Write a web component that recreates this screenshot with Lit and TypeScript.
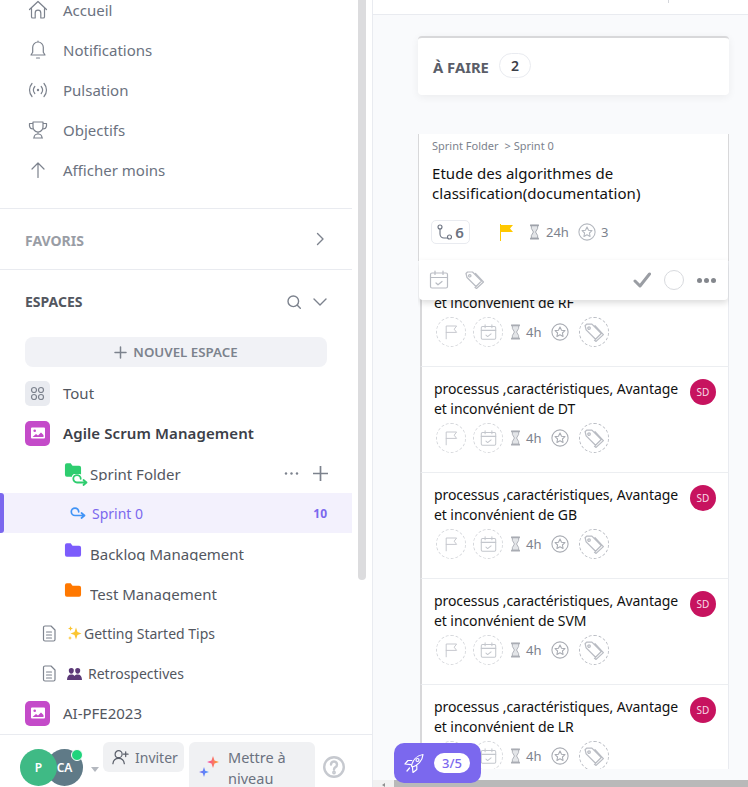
import {LitElement, html, css} from "lit"
import {customElement} from "lit/decorators.js"

const navItems = [
    {label: "Accueil", icon: html`<svg class="ico" viewBox="0 0 20 20"><path d="M1.5 9.5 10 1.5l8.500 8M3.500 8.500v8.200a1.300 1.300 0 0 0 1.300 1.300H7.200v-5a2.800 2.800 0 0 1 5.600 0v5h2.400a1.300 1.300 0 0 0 1.300-1.300V8.500"/></svg>`},
    {label: "Notifications", icon: html`<svg class="ico" viewBox="0 0 20 20"><path d="M10 2a5.300 5.300 0 0 0-5.300 5.300v5L3 15h14l-1.700-2.700v-5A5.300 5.300 0 0 0 10 2zM10 1v1M8.500 18h3"/></svg>`},
    {label: "Pulsation", icon: html`<svg class="ico" viewBox="0 0 20 20"><path d="M4 3.500c-3.300 3.800-3.300 9.200 0 13M16 3.500c3.300 3.800 3.300 9.200 0 13M6.800 6.500c-1.700 2.100-1.700 4.900 0 7M13.200 6.500c1.700 2.100 1.700 4.900 0 7"/><circle cx="10" cy="10" r="1.200" fill="currentColor" stroke="none"/></svg>`},
    {label: "Objectifs", icon: html`<svg class="ico" viewBox="0 0 20 20"><path d="M5 2h10v5a5 5 0 0 1-10 0zM5 3.500H1.500v2.500A3.500 3.500 0 0 0 5 9M15 3.500h3.500v2.500A3.500 3.500 0 0 1 15 9M10 12v2M6 18c0-2.500 2-4 4-4s4 1.500 4 4M5.500 18h9"/></svg>`},
    {label: "Afficher moins", icon: html`<svg class="ico" viewBox="0 0 20 20"><path d="M10 17.500V3M4 9l6-6 6 6"/></svg>`},
]

const folderPath = "M1 3a2 2 0 0 1 2-2h4l2 2.500h7a2 2 0 0 1 2 2V13a2 2 0 0 1-2 2H3a2 2 0 0 1-2-2z"

const spaceIcon = html`<span class="space-ico"><svg viewBox="0 0 16 16"><path fill="#fff" d="M2 2.500h12a1 1 0 0 1 1 1v9a1 1 0 0 1-1 1H2a1 1 0 0 1-1-1v-9a1 1 0 0 1 1-1z"/><circle cx="4.700" cy="5.800" r="1.300" fill="#c44bc9"/><path fill="#c44bc9" d="M2.500 12l3.500-3 2 1.500 3-3 2.500 2.500V12z"/></svg></span>`

const docIcon = html`<svg class="doc" viewBox="0 0 14 17"><path d="M3 1h6l4 4v9.500a1.500 1.500 0 0 1-1.500 1.500h-8.500A1.500 1.500 0 0 1 1.500 14.500V2.500A1.500 1.500 0 0 1 3 1zM4.500 7h5M4.500 10h5M4.500 13h5"/></svg>`

const flagIcon = html`<svg class="flag" viewBox="0 0 20 20"><path d="M4 18.500V2.500h13l-3 4 3 4H4"/></svg>`
const calIcon = html`<svg class="cal" viewBox="0 0 20 20"><rect x="1.500" y="3" width="17" height="15" rx="1.500"/><path d="M1.500 7.500h17M6 1v3.500M14 1v3.500M7 13l2 1.800 4-3.300"/></svg>`
const tagIcon = html`<svg class="tag" viewBox="0 0 22 20"><path d="M2 3.500 3.500 2h5l9 9-5.500 5.500-9-9zM11 17.500l1.500 1 7-6.500-8-8.500"/><circle cx="5.800" cy="5.800" r="1.200"/></svg>`
const glassIcon = html`<svg class="glass" viewBox="0 0 12 18"><path class="sand" d="M2.500 2v3L4.800 9l-2.300 4v3h7v-3L7.200 9l2.300-4V2z"/><path class="bars" d="M1 1.500h10M1 16.500h10"/></svg>`
const starIcon = html`<svg class="star" viewBox="0 0 20 20"><circle cx="10" cy="10" r="9"/><path d="m10 4.500 1.700 3.500 3.800.5-2.800 2.600.7 3.800L10 13l-3.400 1.900.7-3.800-2.800-2.600 3.800-.5z"/></svg>`

const rows = ["RF", "DT", "GB", "SVM", "LR"]

@customElement('app-root')
export class AppRoot extends LitElement {

    static styles = css`
        :host {
            display: block;
            width: 748px;
            height: 787px;
            overflow: hidden;
            font-family: "Noto Sans", sans-serif;
            background: #fff;
        }
        svg {
            display: block;
            fill: none;
            stroke: currentColor;
            stroke-width: 1.2;
            stroke-linecap: round;
            stroke-linejoin: round;
        }
        .page {
            display: flex;
            height: 787px;
        }

        /* sidebar */
        .sidebar {
            width: 372px;
            flex: none;
            display: flex;
            flex-direction: column;
            border-right: 1px solid #e9ebf0;
        }
        .side-scroll {
            flex: 1;
            min-height: 0;
            display: flex;
            overflow: hidden;
        }
        .side-content {
            width: 352px;
            flex: none;
        }
        .thumb {
            width: 8px;
            height: 580px;
            margin-left: 6px;
            background: #dcdcde;
            border-radius: 0 0 4px 4px;
        }
        .nav {
            margin-top: -10px;
            padding-bottom: 18px;
            border-bottom: 1px solid #e9ebf0;
        }
        .nav-row {
            height: 40px;
            display: flex;
            align-items: center;
            padding-left: 28px;
            color: #6b7280;
            font-size: 15px;
        }
        .ico {
            width: 20px;
            height: 20px;
            margin-right: 15px;
            color: #7c828d;
        }
        .section {
            height: 61px;
            display: flex;
            align-items: center;
            justify-content: space-between;
            padding: 3px 25px 0;
            font-size: 14px;
            font-weight: 700;
            color: #999da5;
            border-bottom: 1px solid #e9ebf0;
            box-sizing: border-box;
        }
        .section svg {
            width: 14px;
            height: 14px;
            color: #7c828d;
            stroke-width: 1.400;
        }
        .section > svg {
            margin-top: -3px;
        }
        .section.espaces {
            height: 63px;
            padding-top: 0;
            border: 0;
            color: #53575f;
        }
        .espaces div {
            display: flex;
            gap: 12px;
        }
        .new-space {
            margin: 4px 25px 6px;
            height: 30px;
            background: #f1f2f6;
            border-radius: 8px;
            display: flex;
            align-items: center;
            justify-content: center;
            gap: 6px;
            color: #7c828d;
            font-size: 13.300px;
            font-weight: 600;
        }
        .new-space svg {
            width: 13px;
            height: 13px;
            stroke-width: 1.500;
        }
        .row {
            height: 40px;
            display: flex;
            align-items: center;
            color: #53575f;
            font-size: 15px;
        }
        .row.space {
            padding-left: 25px;
            gap: 13px;
        }
        .row.space.bold {
            font-weight: 600;
            color: #3c4048;
            letter-spacing: .1px;
        }
        .space-ico, .all-ico {
            width: 25px;
            height: 25px;
            border-radius: 5px;
            background: #c44bc9;
            display: flex;
            align-items: center;
            justify-content: center;
        }
        .space-ico svg {
            width: 16px;
            height: 16px;
            stroke: none;
        }
        .all-ico {
            background: #e9ebf0;
            color: #7c828d;
        }
        .all-ico svg {
            width: 15px;
            height: 15px;
        }
        .row.folder {
            padding-left: 64px;
            position: relative;
        }
        .folder-ico {
            width: 18px;
            height: 16px;
            margin: -6px 8px 0 0;
            stroke: none;
            flex: none;
        }
        .clip {
            height: 15px;
            line-height: 16px;
            overflow: hidden;
            color: #53575f;
        }
        .badge-loop {
            position: absolute;
            left: 72px;
            top: 21px;
            width: 16px;
            height: 13px;
            color: #2ecd6f;
            stroke-width: 1.800;
        }
        .badge-loop .halo {
            stroke: #fff;
            stroke-width: 4;
        }
        .actions {
            margin-left: auto;
            margin-right: 24px;
            display: flex;
            align-items: center;
            gap: 14px;
            color: #7c828d;
        }
        .actions svg {
            width: 15px;
            height: 15px;
            stroke-width: 1.700;
        }
        .active {
            background: #f3f1fd;
            color: #7b68ee;
            padding-left: 70px;
            position: relative;
            font-size: 14px;
        }
        .active::before {
            content: "";
            position: absolute;
            left: 0;
            top: 0;
            bottom: 0;
            width: 4px;
            background: #7b68ee;
            border-radius: 0 3px 3px 0;
        }
        .active svg {
            width: 16px;
            height: 13px;
            margin-right: 6px;
            color: #4194f6;
            stroke-width: 1.700;
        }
        .count {
            margin-left: auto;
            margin-right: 25px;
            font-size: 12px;
            font-weight: 700;
        }
        .row.doc-row {
            padding-left: 42px;
            font-size: 14px;
        }
        .doc {
            width: 14px;
            height: 17px;
            color: #7c828d;
            margin-right: 11px;
        }
        .emoji {
            width: 15px;
            height: 15px;
            stroke: none;
            flex: none;
        }
        .tips {
            margin-left: 2px;
        }
        .retro {
            margin-left: 6px;
        }

        /* footer */
        .side-foot {
            height: 53px;
            flex: none;
            border-top: 1px solid #e9ebf0;
            display: flex;
            padding: 7px 0 0 20px;
            box-sizing: border-box;
            overflow: hidden;
        }
        .avatars {
            position: relative;
            width: 63px;
            height: 37px;
            margin-top: 7px;
            color: #fff;
            font-size: 12px;
            font-weight: 600;
        }
        .avatars span {
            position: absolute;
            top: 0;
            width: 37px;
            height: 37px;
            border-radius: 50%;
            display: flex;
            align-items: center;
            justify-content: center;
        }
        .av-ca {
            left: 26px;
            background: #5f7a87;
        }
        .av-p {
            left: 0;
            background: #3fba85;
        }
        .avatars .dot {
            left: 51px;
            top: 0;
            width: 10px;
            height: 10px;
            background: #1fd47c;
            border: 1px solid #fff;
        }
        .caret {
            width: 0;
            height: 0;
            margin: 25px 0 0 8px;
            border: 4px solid transparent;
            border-top: 5px solid #b4b8bf;
            border-bottom: 0;
        }
        .foot-btn {
            background: #f0f1f3;
            border-radius: 6px;
            color: #6b7280;
            font-size: 14.500px;
            line-height: 21px;
        }
        .invite {
            margin-left: 4px;
            height: 30px;
            width: 81px;
            box-sizing: border-box;
            padding-left: 9px;
            display: flex;
            align-items: center;
            gap: 6px;
            font-size: 14px;
        }
        .invite svg {
            width: 17px;
            height: 16px;
            color: #5b606b;
            stroke-width: 1.300;
        }
        .upgrade {
            margin-left: 5px;
            width: 126px;
            height: 60px;
            display: flex;
            gap: 8px;
            padding-left: 8px;
            padding-top: 5px;
            box-sizing: border-box;
        }
        .upgrade svg {
            width: 23px;
            height: 28px;
            margin-top: 3px;
            stroke: none;
            flex: none;
        }
        .help {
            width: 22px;
            height: 22px;
            margin: 14px 0 0 8px;
            color: #c6c9cf;
            stroke-width: 2.400;
        }

        /* board */
        .main {
            flex: 1;
            min-width: 0;
            display: flex;
            flex-direction: column;
            background: #f9fafc;
            position: relative;
        }
        .topbar {
            height: 14px;
            flex: none;
            background: #fff;
            border-bottom: 1px solid #e9ebf0;
            padding-left: 295px;
        }
        .topbar i {
            display: block;
            width: 1px;
            height: 3px;
            background: #d5d7dc;
        }
        .board {
            flex: 1;
            min-height: 0;
            display: flex;
            flex-direction: column;
            padding: 21px 19px 11px 45px;
        }
        .col-head {
            height: 59px;
            flex: none;
            box-sizing: border-box;
            background: #fff;
            border-top: 2px solid #d8d8da;
            border-radius: 4px;
            box-shadow: 0 2px 8px rgba(0, 0, 0, .06);
            display: flex;
            align-items: center;
            gap: 10px;
            padding-left: 15px;
            margin-bottom: 39px;
            font-size: 14.800px;
            font-weight: 700;
            color: #5a5d68;
        }
        .col-count {
            width: 32px;
            height: 25px;
            box-sizing: border-box;
            border: 1px solid #e9ebf0;
            border-radius: 13px;
            display: flex;
            align-items: center;
            justify-content: center;
            font-size: 14px;
            font-weight: 600;
            color: #3c4048;
            margin-top: -2px;
        }
        .tasks {
            flex: 1;
            min-height: 0;
            overflow: hidden;
            position: relative;
        }
        .open-card {
            height: 127px;
            box-sizing: border-box;
            background: #fff;
            border-left: 1px solid #d8d8da;
            border-right: 1px solid #d8d8da;
            padding: 3px 13px 0;
            color: #111;
        }
        .crumb {
            font-size: 11px;
            line-height: 18px;
            color: #7c828d;
            display: flex;
            gap: 6px;
        }
        .title {
            font-size: 14px;
            line-height: 20px;
            letter-spacing: -.08px;
            color: #111;
        }
        .open-card .title {
            margin-top: 8px;
            font-size: 15px;
            letter-spacing: .05px;
        }
        .meta {
            display: flex;
            align-items: center;
            height: 24px;
            margin-top: 17px;
            color: #7c828d;
            font-size: 13px;
        }
        .chip {
            width: 39px;
            height: 24px;
            box-sizing: border-box;
            border: 1px solid #e9ebf0;
            border-radius: 5px;
            margin-left: -1px;
            display: flex;
            align-items: center;
            justify-content: center;
            gap: 3px;
            font-size: 15px;
            font-weight: 600;
            color: #6b7280;
        }
        .chip svg {
            width: 15px;
            height: 16px;
            stroke-width: 1.100;
        }
        .yellow-flag {
            width: 13px;
            height: 17px;
            margin: 0 16px 0 30px;
            stroke: none;
        }
        .glass {
            width: 11px;
            height: 16px;
            margin-right: 6px;
            color: #9ea2aa;
            flex: none;
        }
        .glass .sand {
            fill: #e3e5e8;
            stroke-width: 1;
        }
        .glass .bars {
            stroke-width: 2;
            stroke-linecap: butt;
        }
        .meta .star {
            width: 18px;
            height: 18px;
            margin: 0 5px 0 9px;
            color: #b4b8bf;
        }
        .toolbar {
            position: absolute;
            left: 1px;
            top: 126px;
            width: 309px;
            height: 40px;
            background: #fff;
            border-radius: 0 0 4px 4px;
            box-shadow: 0 3px 6px rgba(0, 0, 0, .14);
            display: flex;
            align-items: center;
            padding: 0 12px 0 10px;
            box-sizing: border-box;
            color: #b9bcc3;
            z-index: 2;
        }
        .toolbar .cal {
            width: 20px;
            height: 20px;
        }
        .toolbar .tag {
            width: 22px;
            height: 20px;
            margin-left: 15px;
        }
        .toolbar .check {
            width: 18px;
            height: 16px;
            margin-left: auto;
            color: #9a9da3;
            stroke-width: 3;
        }
        .toolbar .circle {
            width: 20px;
            height: 20px;
            border: 1px solid #d8dade;
            border-radius: 50%;
            box-sizing: border-box;
            margin: 0 13px;
        }
        .toolbar .more {
            width: 19px;
            height: 5px;
            color: #84878d;
            stroke: none;
        }
        .task {
            height: 106px;
            box-sizing: border-box;
            margin-left: 2px;
            background: #fff;
            border-left: 2px solid #d8d8da;
            border-right: 1px solid #e9ebf0;
            border-bottom: 1px solid #eceef1;
            padding: 12px 12px 0 12px;
            position: relative;
        }
        .task .title {
            width: 250px;
        }
        .avatar {
            position: absolute;
            left: 268px;
            top: 12px;
            width: 26px;
            height: 26px;
            border-radius: 50%;
            background: #c7135f;
            color: #f8dbe7;
            font-size: 10px;
            display: flex;
            align-items: center;
            justify-content: center;
        }
        .task-meta {
            display: flex;
            align-items: center;
            height: 30px;
            margin-top: 4px;
            margin-left: 2px;
            color: #c4c7cd;
            font-size: 13px;
        }
        .dash {
            width: 30px;
            height: 30px;
            box-sizing: border-box;
            border: 1px dashed #d5d7db;
            border-radius: 50%;
            display: flex;
            align-items: center;
            justify-content: center;
            flex: none;
        }
        .dash .flag {
            width: 16px;
            height: 16px;
        }
        .dash .cal {
            width: 17px;
            height: 17px;
        }
        .dash .tag {
            width: 23px;
            height: 21px;
            color: #b9bcc3;
        }
        .dash.strong {
            border-color: #b9bcc3;
            margin-left: 1px;
        }
        .dash + .dash {
            margin-left: 7px;
        }
        .task-meta .glass {
            margin: 0 5px 0 7px;
            color: #a9acb3;
        }
        .hours {
            color: #7c828d;
        }
        .task-meta .star {
            width: 18px;
            height: 18px;
            margin: 0 9px 0 10px;
            color: #a9acb3;
            flex: none;
        }

        /* floating + scrollbar */
        .rocket {
            position: absolute;
            left: 21px;
            top: 743px;
            width: 87px;
            height: 40px;
            background: #7b68ee;
            border-radius: 10px;
            display: flex;
            align-items: center;
            gap: 10px;
            padding-left: 10px;
            box-sizing: border-box;
            z-index: 3;
        }
        .rocket svg {
            width: 20px;
            height: 20px;
            color: #fff;
        }
        .rocket span {
            width: 36px;
            height: 20px;
            border-radius: 10px;
            background: #fff;
            color: #7b68ee;
            font-size: 13px;
            font-weight: 500;
            display: flex;
            align-items: center;
            justify-content: center;
        }
        .hscroll {
            height: 7px;
            flex: none;
            display: flex;
            background: #f1f1f1;
        }
        .hscroll .arrow {
            width: 21px;
            display: flex;
            justify-content: center;
            align-items: flex-end;
        }
        .hscroll .arrow::before {
            content: "";
            border: 2px solid transparent;
            border-right: 3px solid #8f8f8f;
            border-left: 0;
        }
        .hscroll .bar {
            flex: 1;
            background: #b9b9b9;
        }
    `

    private taskRow(code: string) {
        const label = `processus ,caractéristiques, Avantage et inconvénient de ${code}`
        return html`
            <div class="task">
                <div class="title">${label}</div>
                <span class="avatar">SD</span>
                <div class="task-meta">
                    <span class="dash">${flagIcon}</span>
                    <span class="dash">${calIcon}</span>
                    ${glassIcon}
                    <span class="hours">4h</span>
                    ${starIcon}
                    <span class="dash strong">${tagIcon}</span>
                </div>
            </div>
        `
    }

    render() {
        return html`
            <div class="page">
                <aside class="sidebar">
                    <div class="side-scroll">
                        <div class="side-content">
                            <div class="nav">
                                ${navItems.map(n => html`<div class="nav-row">${n.icon}<span>${n.label}</span></div>`)}
                            </div>
                            <div class="section">
                                <span>FAVORIS</span>
                                <svg viewBox="0 0 14 14"><path d="m4.500 1.500 5.500 5.500-5.500 5.500"/></svg>
                            </div>
                            <div class="section espaces">
                                <span>ESPACES</span>
                                <div>
                                    <svg viewBox="0 0 14 14"><circle cx="6.300" cy="6.300" r="5.300"/><path d="m10.300 10.300 3 3"/></svg>
                                    <svg viewBox="0 0 14 14"><path d="m1 4 6 6 6-6"/></svg>
                                </div>
                            </div>
                            <div class="new-space">
                                <svg viewBox="0 0 13 13"><path d="M6.500 1v11M1 6.500h11"/></svg>
                                NOUVEL ESPACE
                            </div>
                            <div class="row space">
                                <span class="all-ico"><svg viewBox="0 0 15 15"><circle cx="4" cy="4" r="2.500"/><circle cx="11" cy="4" r="2.500"/><circle cx="4" cy="11" r="2.500"/><circle cx="11" cy="11" r="2.500"/></svg></span>
                                Tout
                            </div>
                            <div class="row space bold">${spaceIcon} Agile Scrum Management</div>
                            <div class="row folder">
                                <svg class="folder-ico" viewBox="0 0 19 16"><path fill="#2ecd6f" d="${folderPath}"/></svg>
                                <svg class="badge-loop" viewBox="0 0 16 13">
                                    <path class="halo" d="M8.700 4.800A3.700 3.700 0 1 0 5 8.500h9.500"/>
                                    <path d="M8.700 4.800A3.700 3.700 0 1 0 5 8.500h9.500M11.500 6l3 2.500-3 2.500"/>
                                </svg>
                                <span class="clip">Sprint Folder</span>
                                <div class="actions">
                                    <svg viewBox="0 0 15 15"><circle cx="2" cy="7.500" r="1.200" fill="currentColor" stroke="none"/><circle cx="7.500" cy="7.500" r="1.200" fill="currentColor" stroke="none"/><circle cx="13" cy="7.500" r="1.200" fill="currentColor" stroke="none"/></svg>
                                    <svg viewBox="0 0 15 15"><path d="M7.500 0v15M0 7.500h15"/></svg>
                                </div>
                            </div>
                            <div class="row active">
                                <svg viewBox="0 0 16 13"><path d="M8.700 4.800A3.700 3.700 0 1 0 5 8.500h9.500M11.500 6l3 2.500-3 2.500"/></svg>
                                Sprint 0
                                <span class="count">10</span>
                            </div>
                            <div class="row folder">
                                <svg class="folder-ico" viewBox="0 0 19 16"><path fill="#7c5cfc" d="${folderPath}"/></svg>
                                <span class="clip">Backlog Management</span>
                            </div>
                            <div class="row folder">
                                <svg class="folder-ico" viewBox="0 0 19 16"><path fill="#ff7800" d="${folderPath}"/></svg>
                                <span class="clip">Test Management</span>
                            </div>
                            <div class="row doc-row">
                                ${docIcon}
                                <svg class="emoji" viewBox="0 0 15 15"><path fill="#fbc531" d="M9 1.500 10.500 6l4 1.500-4 1.500L9 13.500 7.500 9l-4-1.500 4-1.500zM3.500 0l.7 1.800 1.800.7-1.800.7-.7 1.800-.7-1.800L1 2.500l1.800-.7zM3 10l.6 1.400 1.400.6-1.400.6L3 14l-.6-1.400L1 12l1.400-.4z"/></svg>
                                <span class="tips">Getting Started Tips</span>
                            </div>
                            <div class="row doc-row">
                                ${docIcon}
                                <svg class="emoji" viewBox="0 0 15 15"><path fill="#5c3a78" d="M4.300 2a2.500 2.500 0 0 1 2.500 2.700c0 1.500-1 3-2.500 3s-2.500-1.500-2.500-3A2.500 2.500 0 0 1 4.300 2zM10.700 2a2.500 2.500 0 0 1 2.500 2.700c0 1.500-1 3-2.500 3s-2.500-1.500-2.500-3A2.500 2.500 0 0 1 10.700 2zM0 14c0-3.500 1.500-5.500 4.300-5.500 1.300 0 2.400.5 3.200 1.400.8-.9 1.900-1.400 3.200-1.400 2.800 0 4.300 2 4.300 5.500z"/></svg>
                                <span class="retro">Retrospectives</span>
                            </div>
                            <div class="row space">${spaceIcon} AI-PFE2023</div>
                        </div>
                        <div class="thumb"></div>
                    </div>
                    <div class="side-foot">
                        <div class="avatars">
                            <span class="av-ca">CA</span>
                            <span class="av-p">P</span>
                            <span class="dot"></span>
                        </div>
                        <div class="caret"></div>
                        <div class="foot-btn invite">
                            <svg viewBox="0 0 18 16"><circle cx="7" cy="5" r="3.700"/><path d="M1 15c.4-3.500 2.800-5.500 6-5.500s5.600 2 6 5.500M14.500 2.500v5M12 5h5"/></svg>
                            Inviter
                        </div>
                        <div class="foot-btn upgrade">
                            <svg viewBox="0 0 23 28">
                                <defs>
                                    <linearGradient id="sp1" x1="0" y1="0" x2="1" y2="0"><stop offset="0" stop-color="#f43fb0"/><stop offset="1" stop-color="#ffa81f"/></linearGradient>
                                    <linearGradient id="sp2" x1="0" y1="0" x2="1" y2="0"><stop offset="0" stop-color="#7b68ee"/><stop offset="1" stop-color="#4a9cff"/></linearGradient>
                                </defs>
                                <path fill="url(#sp1)" d="M16 6 17.500 10.500 22 12 17.500 13.500 16 18 14.500 13.500 10 12 14.500 10.500z"/>
                                <path fill="url(#sp2)" d="M7 17 8.200 20.800 12 22 8.200 23.200 7 27 5.800 23.200 2 22 5.800 20.800z"/>
                            </svg>
                            <span>Mettre à niveau</span>
                        </div>
                        <svg class="help" viewBox="0 0 22 22"><circle cx="11" cy="11" r="9.800"/><path d="M8 8.500a3 3 0 1 1 4.500 2.600c-1 .6-1.500 1.200-1.500 2.400"/><circle cx="11" cy="16.500" r=".7" fill="currentColor"/></svg>
                    </div>
                </aside>
                <main class="main">
                    <div class="topbar"><i></i></div>
                    <div class="board">
                        <div class="col-head">
                            À FAIRE
                            <span class="col-count">2</span>
                        </div>
                        <div class="tasks">
                            <div class="open-card">
                                <div class="crumb"><span>Sprint Folder</span><span>&gt; Sprint 0</span></div>
                                <div class="title">Etude des algorithmes de classification(documentation)</div>
                                <div class="meta">
                                    <span class="chip">
                                        <svg viewBox="0 0 15 16"><circle cx="3" cy="3" r="2"/><circle cx="12.500" cy="13" r="2"/><path d="M3 5v5a4 4 0 0 0 4 4h3.500"/></svg>
                                        6
                                    </span>
                                    <svg class="yellow-flag" viewBox="0 0 13 17"><path fill="#ffc800" d="M0 0h1v17H0zM1 1h12l-3 3.500 3 3.500H1z"/></svg>
                                    ${glassIcon}
                                    24h
                                    ${starIcon}
                                    3
                                </div>
                            </div>
                            <div class="toolbar">
                                ${calIcon}
                                ${tagIcon}
                                <svg class="check" viewBox="0 0 18 16"><path d="m2 9 5 5L16.500 2"/></svg>
                                <span class="circle"></span>
                                <svg class="more" viewBox="0 0 19 5"><circle cx="2.500" cy="2.500" r="2.500" fill="currentColor"/><circle cx="9.500" cy="2.500" r="2.500" fill="currentColor"/><circle cx="16.500" cy="2.500" r="2.500" fill="currentColor"/></svg>
                            </div>
                            ${rows.map(r => this.taskRow(r))}
                        </div>
                    </div>
                    <div class="hscroll"><span class="arrow"></span><span class="bar"></span></div>
                    <div class="rocket">
                        <svg viewBox="0 0 20 20"><path d="M7.500 13C8.500 7.500 12.500 2.500 19 1.500 18.500 8 13.500 12.500 8.500 14zM7.800 7.500H4L1 11l5.600.6M12.800 12.800v3.700L9 19.500l-.6-5.400M5.500 15l-2.500 3"/><circle cx="13.500" cy="7" r="1.500"/></svg>
                        <span>3/5</span>
                    </div>
                </main>
            </div>
        `
    }
}
